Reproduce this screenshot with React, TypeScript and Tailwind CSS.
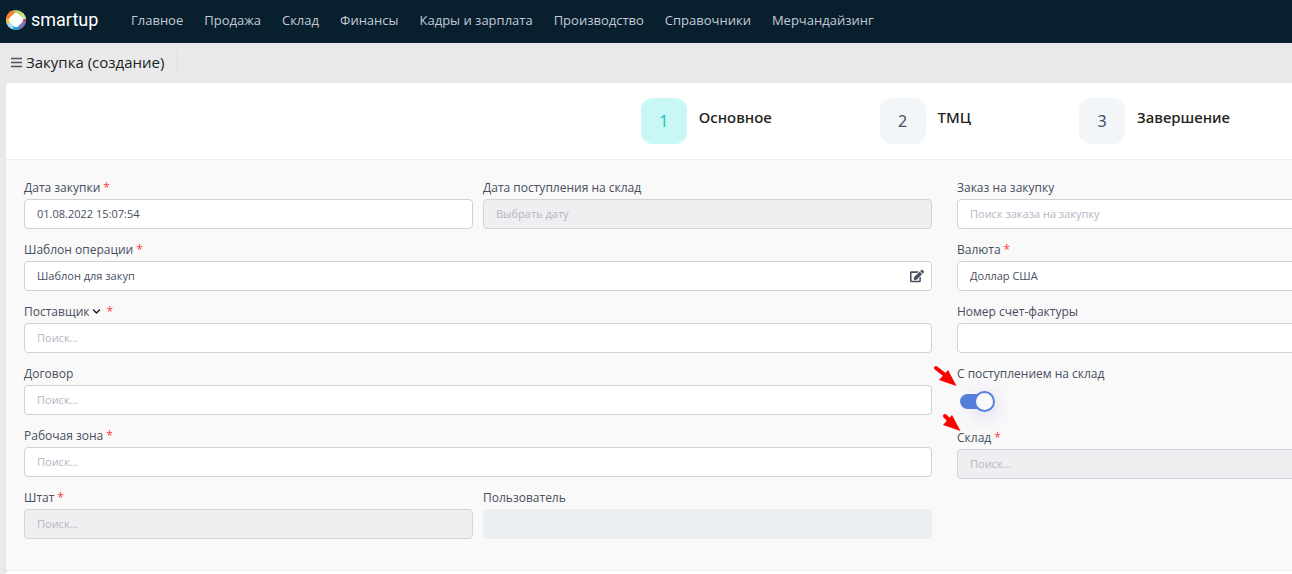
import type { ReactNode } from "react";
import { FaChevronDown, FaEdit } from "react-icons/fa";

const menu = [
  "Главное",
  "Продажа",
  "Склад",
  "Финансы",
  "Кадры и зарплата",
  "Производство",
  "Справочники",
  "Мерчандайзинг",
];

const steps = ["Основное", "ТМЦ", "Завершение"];

function Logo() {
  return (
    <a href="#" className="flex items-center gap-[5px] text-white">
      <svg width="20" height="20" viewBox="0 0 20 20" aria-hidden="true">
        <circle cx="10" cy="10" r="10" fill="#b8d56a" />
        <path d="M8 .2A10 10 0 0 0 0 9L10 10Z" fill="#f58233" />
        <path d="M17.07 2.93A10 10 0 0 1 20 9L10 10Z" fill="#cfe39a" />
        <path d="M20 9A10 10 0 0 1 19.5 13L10 10Z" fill="#a83f97" />
        <path d="M19.5 13A10 10 0 0 1 13 19.5L10 10Z" fill="#7a74b8" />
        <path d="M13 19.5A10 10 0 0 1 6.5 19.3L10 10Z" fill="#139fdd" />
        <path d="M6.5 19.3A10 10 0 0 1 .7 13.5L10 10Z" fill="#9fdcf5" />
        <path d="M.7 13.5A10 10 0 0 1 0 9L10 10Z" fill="#f2c230" />
        <rect x="4" y="4" width="12" height="12" rx="3.5" transform="rotate(45 10 10)" fill="#fff" />
      </svg>
      <span className="font-[Roboto] text-[18px] leading-5">smartup</span>
    </a>
  );
}

interface FieldProps {
  id: string;
  label: string;
  required?: boolean;
  value?: string;
  placeholder?: string;
  disabled?: boolean;
  plain?: boolean;
  addon?: ReactNode;
  action?: ReactNode;
  marker?: ReactNode;
  className?: string;
}

function Field({
  id,
  label,
  required = false,
  value,
  placeholder,
  disabled = false,
  plain = false,
  addon,
  action,
  marker,
  className = "",
}: FieldProps) {
  const look = plain
    ? "border-transparent bg-[#ebeff2]"
    : disabled
      ? "border-[#ced4da] bg-[#eeeff1]"
      : "border-[#ced1dc] bg-white";

  return (
    <div className={`relative ${className}`}>
      <div className="flex items-center pb-[3px] text-[12px] leading-[17px]">
        <label htmlFor={id}>{label}</label>
        {addon}
        {required && <span className="ml-[3px] text-[#ff3b3b]">*</span>}
      </div>
      <div className="relative">
        <input
          id={id}
          type="text"
          defaultValue={value}
          placeholder={placeholder}
          disabled={disabled}
          className={`block h-[30px] w-full rounded border px-3 pb-0.5 text-[11px] placeholder:text-[#b5b5c3] ${look}`}
        />
        {action}
      </div>
      {marker}
    </div>
  );
}

function Arrow({ short = false, className }: { short?: boolean; className: string }) {
  return (
    <svg width="24" height="22" viewBox="0 0 24 22" className={`absolute ${className}`} aria-hidden="true">
      <path d={short ? "M8 6L13 11" : "M3 3L12 10"} stroke="#f00" strokeWidth="4" strokeLinecap="round" />
      <path d="M23.5 21L15 5L6 15Z" fill="#f00" />
    </svg>
  );
}

export default function App() {
  return (
    <div className="min-h-screen overflow-hidden bg-[#e9e9eb] font-['Open_Sans','Noto_Sans',sans-serif] text-[#464e5f]">
      <header className="flex h-[43px] items-center bg-[#081f2e] pb-1 pl-[6px]">
        <div className="w-[125px]">
          <Logo />
        </div>
        <nav className="flex gap-[21px] text-[13px] leading-5 text-[#c3cad6]">
          {menu.map((item) => (
            <a key={item} href="#">{item}</a>
          ))}
        </nav>
      </header>

      <div className="flex h-10 items-center pb-0.5 pl-[11px] text-[#212121]">
        <button type="button" aria-label="Меню" className="mr-1">
          <svg width="11" height="11" viewBox="0 0 11 11" stroke="#555" strokeWidth="1.5">
            <path d="M0 1.5H11M0 5.5H11M0 9.5H11" />
          </svg>
        </button>
        <h1 className="text-[15px]">Закупка (создание)</h1>
        <div className="ml-3 h-6 border-l border-[#e3e3e6]" />
      </div>

      <main className="ml-[6px]">
        <ol className="flex h-[77px] justify-end gap-[108px] rounded-tl border-b border-[#ebedf0] bg-white pt-[15px] pr-[62px] font-['Noto_Sans',sans-serif]">
          {steps.map((step, i) => (
            <li key={step}>
              <button type="button" className="flex gap-3">
                <span
                  className={`flex size-[46px] items-center justify-center rounded-xl text-[16px] ${
                    i === 0 ? "bg-[#c9f7f5] text-[#1bc5bd]" : "bg-[#f3f6f9]"
                  }`}
                >
                  {i + 1}
                </span>
                <span className="pt-[7px] text-[15px] leading-6 font-medium text-[#212121]">{step}</span>
              </button>
            </li>
          ))}
        </ol>

        <form className="-mr-3 grid grid-cols-[908fr_347fr] gap-x-[25px] bg-[#f9f9f9] pt-[19px] pb-[31px] pl-[18px]">
          <div className="grid grid-cols-2 content-start gap-x-[10px] gap-y-3">
            <Field id="date" label="Дата закупки" required value="01.08.2022 15:07:54" />
            <Field id="arrival" label="Дата поступления на склад" placeholder="Выбрать дату" disabled />
            <Field
              id="template"
              label="Шаблон операции"
              required
              value="Шаблон для закуп"
              className="col-span-2"
              action={
                <button type="button" aria-label="Изменить" className="absolute top-2 right-2">
                  <FaEdit size={14} />
                </button>
              }
            />
            <Field
              id="supplier"
              label="Поставщик"
              required
              placeholder="Поиск..."
              className="col-span-2"
              addon={
                <button type="button" aria-label="Тип поставщика" className="mr-[3px] ml-0.5 text-[#212121]">
                  <FaChevronDown size={9} />
                </button>
              }
            />
            <Field id="contract" label="Договор" placeholder="Поиск..." className="col-span-2" />
            <Field id="zone" label="Рабочая зона" required placeholder="Поиск..." className="col-span-2" />
            <Field id="staff" label="Штат" required placeholder="Поиск..." disabled />
            <Field id="user" label="Пользователь" disabled plain />
          </div>

          <div className="flex flex-col gap-3">
            <Field id="order" label="Заказ на закупку" placeholder="Поиск заказа на закупку" />
            <Field id="currency" label="Валюта" required value="Доллар США" />
            <Field id="invoice" label="Номер счет-фактуры" />
            <div className="relative">
              <label htmlFor="receipt" className="block text-[12px] leading-[17px]">С поступлением на склад</label>
              <input
                id="receipt"
                type="checkbox"
                role="switch"
                defaultChecked
                className="relative mt-[9px] mb-[5px] ml-[3px] block h-[21px] w-[35px] appearance-none before:absolute before:top-[3px] before:left-0 before:h-[15px] before:w-[30px] before:rounded-full before:bg-[#5680d9] after:absolute after:top-0 after:right-0 after:size-[21px] after:rounded-full after:border-2 after:border-[#5680d9] after:bg-[#f9f9f9] after:shadow-[0_4px_20px_rgba(100,80,220,0.25)]"
              />
              <Arrow className="top-0 -left-6" />
            </div>
            <Field
              id="stock"
              label="Склад"
              required
              placeholder="Поиск..."
              disabled
              marker={<Arrow short className="-top-[19px] -left-5" />}
            />
          </div>
        </form>

        <footer className="-mr-3 h-4 rounded-tl border-t border-[#ebedf0] bg-white" />
      </main>
    </div>
  );
}
